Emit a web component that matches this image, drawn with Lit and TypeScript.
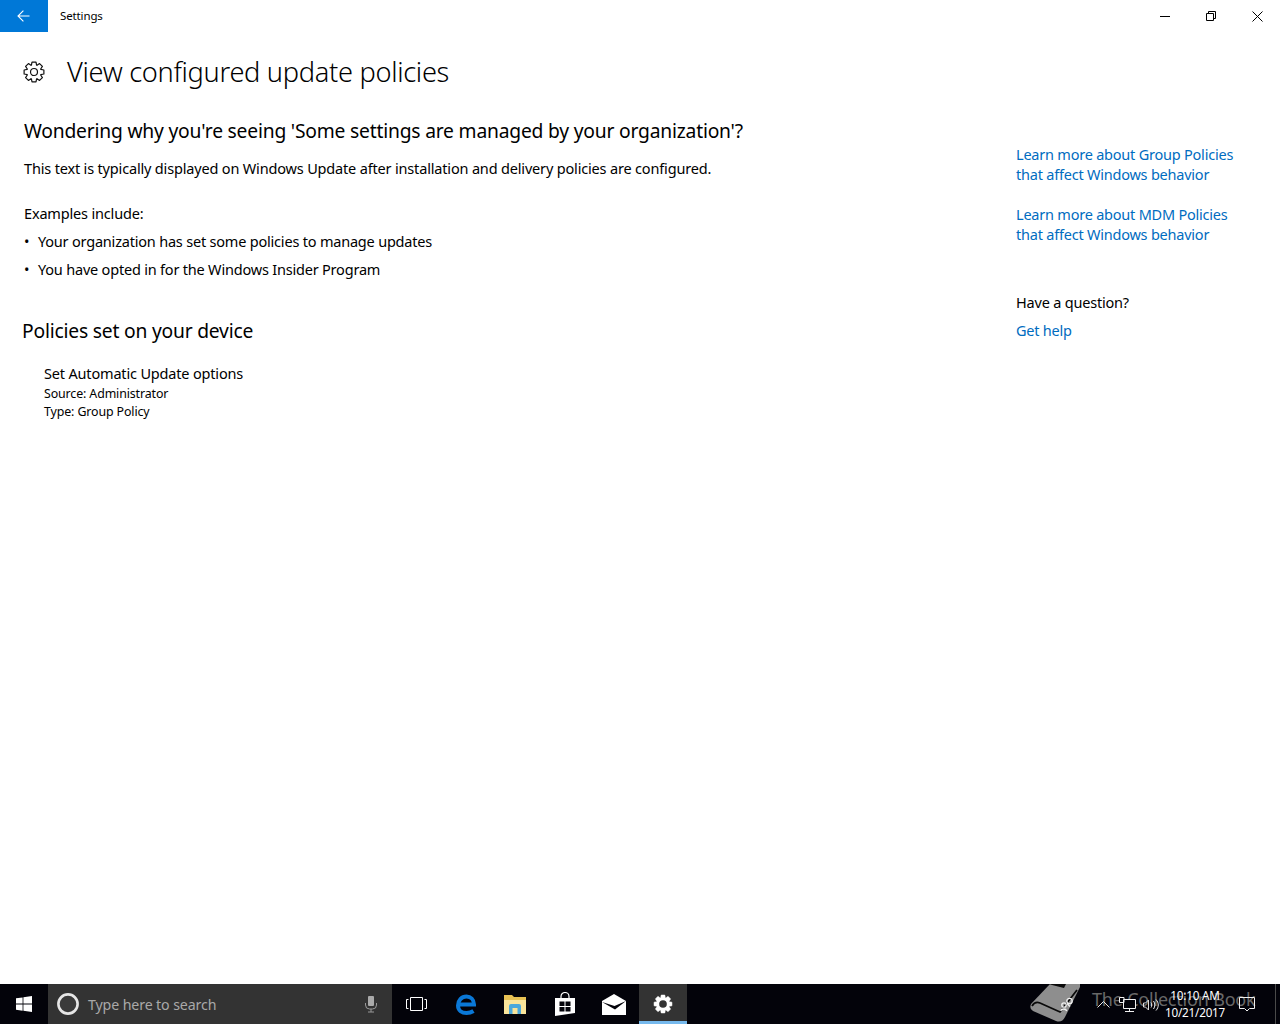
import { LitElement, html, css } from "lit";
import { customElement } from "lit/decorators.js";

const gear = (size: number, stroke: string, sw: number, fill = "none", hole = "none", holeR = 3.8) => {
  const teeth = 8, ro = 11, ri = 8;
  let d = "";
  for (let i = 0; i < teeth; i++) {
    const a = (i / teeth) * Math.PI * 2;
    const w = 0.2, v = 0.36;
    const p = [[ri, a - v], [ro, a - w], [ro, a + w], [ri, a + v]];
    p.forEach(([r, t], k) => {
      const x = (12 + r * Math.sin(t)).toFixed(2), y = (12 - r * Math.cos(t)).toFixed(2);
      d += (i === 0 && k === 0 ? "M" : "L") + x + " " + y + " ";
    });
  }
  d += "Z";
  return html`<svg width=${size} height=${size} viewBox="0 0 24 24"><path d=${d} fill=${fill} stroke=${stroke} stroke-width=${sw} stroke-linejoin="round"/><circle cx="12" cy="12" r=${holeR} fill=${hole} stroke=${stroke} stroke-width=${fill === "none" ? sw : 0}/></svg>`;
};

@customElement("app-root")
export class AppRoot extends LitElement {
  static styles = css`
    :host { display: flex; flex-direction: column; height: 1024px; width: 1280px; overflow: hidden; background: #fff; color: #000; font-family: "Noto Sans", "Open Sans", sans-serif; position: relative; }
    .titlebar { height: 32px; display: flex; align-items: center; flex: none; }
    .back { width: 48px; height: 32px; background: #0078d7; display: flex; align-items: center; justify-content: center; }
    .apptitle { margin-left: 12px; font-size: 11.5px; letter-spacing: -0.13px; position: relative; top: -1px; }
    .controls { margin-left: auto; display: flex; }
    .ctl { width: 46px; height: 32px; display: flex; align-items: center; justify-content: center; }
    .main { flex: 1; display: flex; min-height: 0; }
    .content { flex: 1; padding-left: 24px; min-width: 0; }
    .header { display: flex; align-items: center; height: 40px; margin-top: 20px; }
    .header svg { flex: none; margin-left: -1px; }
    h1 { margin: 0 0 0 22px; font-size: 27.2px; font-weight: 300; line-height: 40px; letter-spacing: -0.3px; }
    h2 { margin: 0; font-weight: 400; font-size: 19.25px; line-height: 28px; letter-spacing: -0.2px; }
    .q { margin-top: 25px; }
    p { margin: 0; font-size: 14.5px; line-height: 20px; letter-spacing: -0.17px; }
    .intro { margin-top: 13px; }
    .ex { margin-top: 25px; }
    ul { list-style: none; margin: 8px 0 0; padding: 0; display: flex; flex-direction: column; gap: 8px; }
    li { font-size: 14.5px; line-height: 20px; letter-spacing: -0.2px; display: flex; }
    li span.b { width: 14px; flex: none; }
    .psec { margin-top: 38px; margin-left: -2px; }
    .policy { margin: 18px 0 0 20px; }
    .policy .t { font-size: 14.5px; line-height: 20px; letter-spacing: -0.17px; margin-bottom: 2px; }
    .policy .s { font-size: 12.4px; line-height: 18px; letter-spacing: -0.12px; }
    .side { width: 264px; flex: none; padding-top: 112px; }
    .link { color: #006cc0; font-size: 14.5px; line-height: 20px; letter-spacing: -0.22px; }
    .link + .link { margin-top: 20px; }
    .have { margin-top: 48px; font-size: 14.5px; line-height: 20px; letter-spacing: -0.2px; }
    .link.help { margin-top: 8px; }
    .taskbar { height: 40px; background: #03030a; flex: none; display: flex; align-items: stretch; position: relative; }
    .start { width: 48px; display: flex; align-items: center; justify-content: center; }
    .search { width: 344px; background: #333; display: flex; align-items: center; color: #a9a9a9; font-size: 14.2px; letter-spacing: -0.12px; }
    .search .cortana { margin-left: 8px; width: 24px; height: 24px; flex: none; }
    .search .ph { margin-left: 8px; flex: 1; }
    .search .mic { margin-right: 13px; display: flex; }
    .tb { width: 49.4px; display: flex; align-items: center; justify-content: center; }
    .tb.active { background: #333; border-bottom: 3px solid #76b9ed; box-sizing: border-box; padding-top: 3px; width: 48px; }
    .tray { position: absolute; left: 0; top: 0; width: 1280px; height: 40px; overflow: hidden; pointer-events: none; }
    .wmicon { position: absolute; left: 1025px; top: 0; }
    .wmtext { position: absolute; left: 1092px; top: 2px; font-size: 18px; line-height: 26px; color: #686868; white-space: nowrap; letter-spacing: -0.2px; }
    .clock { position: absolute; left: 1140px; width: 110px; top: 3px; text-align: center; color: #fff; font-size: 11.7px; line-height: 17px; letter-spacing: -0.2px; }
    .ti { position: absolute; }
    .chev { left: 1097px; top: 17px; }
    .net { left: 1119px; top: 13px; }
    .vol { left: 1143px; top: 15px; }
    .note { left: 1239px; top: 13px; }
    .sep { position: absolute; left: 1275px; top: 0; width: 1px; height: 40px; background: #4a4a4a; }
  `;

  render() {
    return html`
      <div class="titlebar">
        <div class="back"><svg width="14" height="14" viewBox="0 0 14 14"><path d="M12.5 7H1.200M6.400 1.600L1 7l5.400 5.400" fill="none" stroke="#fff" stroke-width="1.100"/></svg></div>
        <div class="apptitle">Settings</div>
        <div class="controls">
          <div class="ctl"><svg width="10" height="10" viewBox="0 0 10 10"><path d="M0 5.500h10" stroke="#000" stroke-width="1"/></svg></div>
          <div class="ctl"><svg width="10" height="10" viewBox="0 0 10 10"><path d="M.5 2.500h7v7h-7zM2.500 2.500v-2h7v7h-2" fill="none" stroke="#000" stroke-width="1"/></svg></div>
          <div class="ctl"><svg width="11" height="11" viewBox="0 0 11 11"><path d="M.5.5l10 10M10.500.5l-10 10" stroke="#000" stroke-width="1"/></svg></div>
        </div>
      </div>
      <div class="main">
        <div class="content">
          <div class="header">
            ${gear(22, "#111", 1.3)}
            <h1>View configured update policies</h1>
          </div>
          <h2 class="q">Wondering why you're seeing 'Some settings are managed by your organization'?</h2>
          <p class="intro">This text is typically displayed on Windows Update after installation and delivery policies are configured.</p>
          <p class="ex">Examples include:</p>
          <ul>
            <li><span class="b">•</span>Your organization has set some policies to manage updates</li>
            <li><span class="b">•</span>You have opted in for the Windows Insider Program</li>
          </ul>
          <h2 class="psec">Policies set on your device</h2>
          <div class="policy">
            <div class="t">Set Automatic Update options</div>
            <div class="s">Source: Administrator</div>
            <div class="s">Type: Group Policy</div>
          </div>
        </div>
        <div class="side">
          <div class="link">Learn more about Group Policies<br />that affect Windows behavior</div>
          <div class="link">Learn more about MDM Policies<br />that affect Windows behavior</div>
          <div class="have">Have a question?</div>
          <div class="link help">Get help</div>
        </div>
      </div>
      <div class="taskbar">
        <div class="start"><svg width="16" height="16" viewBox="0 0 16 16"><path d="M0 2.300l6.600-.9v6.200H0zM7.400 1.300L16 0v7.600H7.400zM0 8.400h6.600v6.300L0 13.700zM7.400 8.400H16V16l-8.600-1.200z" fill="#fff"/></svg></div>
        <div class="search">
          <svg class="cortana" viewBox="0 0 24 24"><circle cx="12" cy="12" r="9.600" fill="#3a3a3a" stroke="#e6e6e6" stroke-width="2.600"/></svg>
          <span class="ph">Type here to search</span>
          <span class="mic"><svg width="16" height="18" viewBox="0 0 16 18"><rect x="5" y="1" width="6" height="10" rx="1" fill="#aaa"/><path d="M2.500 8v2a4 4 0 0 0 4 4h3a4 4 0 0 0 4-4V8M8 14v3M5 17h6" fill="none" stroke="#999" stroke-width="1"/></svg></span>
        </div>
        <div class="tb"><svg width="21" height="14" viewBox="0 0 21 14"><path d="M4.500.5h12v13h-12z" fill="none" stroke="#fff"/><path d="M2.500 2.500H.5v9h2M18.500 2.500h2v9h-2" fill="none" stroke="#fff"/></svg></div>
        <div class="tb"><svg width="20" height="21" viewBox="0 0 20 21"><path d="M3 10.500H18C18 5.500 14.500 2.500 10.500 2.500 5.500 2.500 2 6.500 2 11.500 2 16.500 6 19 10.500 19 13.500 19 15.500 18.300 17.500 17" fill="none" stroke="#0a78d7" stroke-width="4"/></svg></div>
        <div class="tb"><svg width="22" height="20" viewBox="0 0 22 20"><path d="M0 1h8l2 2h12v4H0z" fill="#e8c254"/><path d="M0 6h22v14H0z" fill="#f9e49a"/><path d="M5 20v-8a2 2 0 0 1 2-2h8a2 2 0 0 1 2 2v8h-3.500v-6h-5v6z" fill="#4aa8dc"/></svg></div>
        <div class="tb"><svg width="22" height="24" viewBox="0 0 22 24"><path d="M7 6V4.500C7 2 9 .5 11 .5s4 1.500 4 4V6" fill="none" stroke="#fff" stroke-width="1.200"/><path d="M1 6h20v15l-20 3z" fill="#fff"/><path d="M5.500 9.500h5v4.500h-5zM11.500 9.500h5v4.500h-5zM5.500 15h5v4.500h-5zM11.500 15h5v4.500h-5z" fill="#03030a"/></svg></div>
        <div class="tb"><svg width="24" height="21" viewBox="0 0 24 21"><path d="M0 7L12 0l12 7v14H0z" fill="#fff"/><path d="M0 8l13 7.500L24 7 12.500 12z" fill="#03030a"/></svg></div>
        <div class="tb active">${gear(20, "#fff", 0.6, "#fff", "#333", 4.6)}</div>
        <div class="tray">
          <svg class="wmicon" width="56" height="40" viewBox="0 0 56 40"><path d="M25 0H55V3L40 33Q37 39 31 37L8 27Q4 25 6 20Z" fill="#8e8e8e"/><path d="M24 0H41L39 4 27 1z" fill="#0a0a0a"/><path d="M7 22Q10 17 15 19L35 28 52 6" fill="none" stroke="#0a0a0a" stroke-width="1.800"/></svg>
          <svg class="ti" style="left:1060px;top:13px" width="14" height="15" viewBox="0 0 14 15"><circle cx="9.500" cy="4" r="2.700" fill="none" stroke="#f0f0f0" stroke-width="1.300"/><circle cx="4" cy="8" r="2.200" fill="none" stroke="#f0f0f0" stroke-width="1.300"/><path d="M.8 14c.3-2.500 5-2.800 6 0M7 6.500l3 3" fill="none" stroke="#f0f0f0" stroke-width="1.300"/></svg>
          <div class="wmtext">The Collection Book</div>
          <svg class="ti chev" width="13" height="7" viewBox="0 0 13 7"><path d="M.5 6.500l6-6 6 6" fill="none" stroke="#e8e8e8" stroke-width="1"/></svg>
          <svg class="ti net" width="17" height="15" viewBox="0 0 17 15"><path d="M4.500 2.500h12v9h-12zM10.500 11.500v2.500M6 14.500h9M.5.500h4.500v5H.5z" fill="#03030a" stroke="#f0f0f0" stroke-width="1"/></svg>
          <svg class="ti vol" width="17" height="12" viewBox="0 0 17 12"><path d="M.5 4H2.500L5.500 1v10L2.500 8H.5z" fill="none" stroke="#ddd"/><path d="M8 3.500c1 1.500 1 3.500 0 5M10.500 2c1.800 2.500 1.800 5.500 0 8M13 .5c3 3.500 3 7.500 0 11" fill="none" stroke="#f0f0f0"/></svg>
          <div class="clock">10:10 AM<br />10/21/2017</div>
          <svg class="ti note" width="16" height="15" viewBox="0 0 16 15"><path d="M.5.5h15v11h-5L8 14 5.500 11.500h-5z" fill="none" stroke="#f0f0f0"/></svg>
          <div class="sep"></div>
        </div>
      </div>
    `;
  }
}
